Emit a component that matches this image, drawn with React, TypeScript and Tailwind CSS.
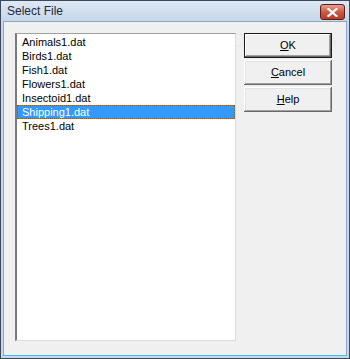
import React, { useState } from 'react';

const files = [
  'Animals1.dat',
  'Birds1.dat',
  'Fish1.dat',
  'Flowers1.dat',
  'Insectoid1.dat',
  'Shipping1.dat',
  'Trees1.dat',
];

const Btn: React.FC<{ label: string; hot: string; primary?: boolean }> = ({ label, hot, primary }) => {
  const rest = label.slice(hot.length);
  return (
    <button
      className={
        'relative z-10 w-[88px] h-[25px] bg-[#f0f0f0] text-[11px] text-black flex items-center justify-center ' +
        (primary
          ? 'border border-[#1a1a1a] shadow-[inset_-1px_-1px_0_#696969,inset_1px_1px_0_#ffffff,inset_-2px_-2px_0_#a0a0a0]'
          : 'shadow-[inset_-1px_-1px_0_#696969,inset_1px_1px_0_#ffffff,inset_-2px_-2px_0_#a0a0a0,inset_2px_2px_0_#e3e3e3]')
      }
    >
      <span className="underline underline-offset-[1px]">{hot}</span>
      {rest}
    </button>
  );
};

const App: React.FC = () => {
  const [selected, setSelected] = useState(5);

  return (
    <div
      className="w-[350px] h-[359px] border border-[#3a4a5c] bg-[#c8d8ec] flex flex-col"
      style={{ fontFamily: '"Liberation Sans", Arial, sans-serif' }}
    >
      <div className="h-[21px] flex items-center justify-between pl-[6px] pr-[4px] bg-gradient-to-b from-[#dfe8f4] to-[#c6d6ea]">
        <span className="text-[12px] text-[#1e2a38]">Select File</span>
        <div className="w-[25px] h-[16px] mt-[2px] rounded-[3px] border border-[#5a2018] bg-gradient-to-b from-[#e8a090] via-[#c95a44] to-[#b83c26] flex items-center justify-center">
          <svg width="11" height="9" viewBox="0 0 11 9">
            <path d="M1.5 1 L9.5 8 M9.5 1 L1.5 8" stroke="#ffffff" strokeWidth="2.2" strokeLinecap="square" />
          </svg>
        </div>
      </div>
      <div className="relative flex-1 mx-[2px] mb-[2px] border border-[#8ea6c2] border-b-[#3cc0f0] bg-[#f0f0f0] flex gap-[8px] pl-[11px] pt-[11px] pb-[14px]">
        <div className="absolute left-[212px] top-[3px] text-[20px] tracking-[1px] text-[#ebebeb] pointer-events-none">
          SOFTPEDIA
        </div>
        <div className="relative w-[221px] h-[308px] bg-white border border-[#dcdcdc] border-l-[#7a7a7a] border-t-[#a0a0a0] border-l-2 pt-[1px] text-[11px] text-black">
          {files.map((f, i) => (
            <div
              key={f}
              onClick={() => setSelected(i)}
              className={
                'h-[14px] leading-[14px] pl-[5px] ' +
                (i === selected ? 'bg-[#3399ff] text-white outline outline-1 outline-dotted outline-[#8a5a20] -outline-offset-1' : '')
              }
            >
              {f}
            </div>
          ))}
        </div>
        <div className="flex flex-col gap-[2px]">
          <Btn label="OK" hot="O" primary />
          <Btn label="Cancel" hot="C" />
          <Btn label="Help" hot="H" />
        </div>
      </div>
    </div>
  );
};

export default App;
